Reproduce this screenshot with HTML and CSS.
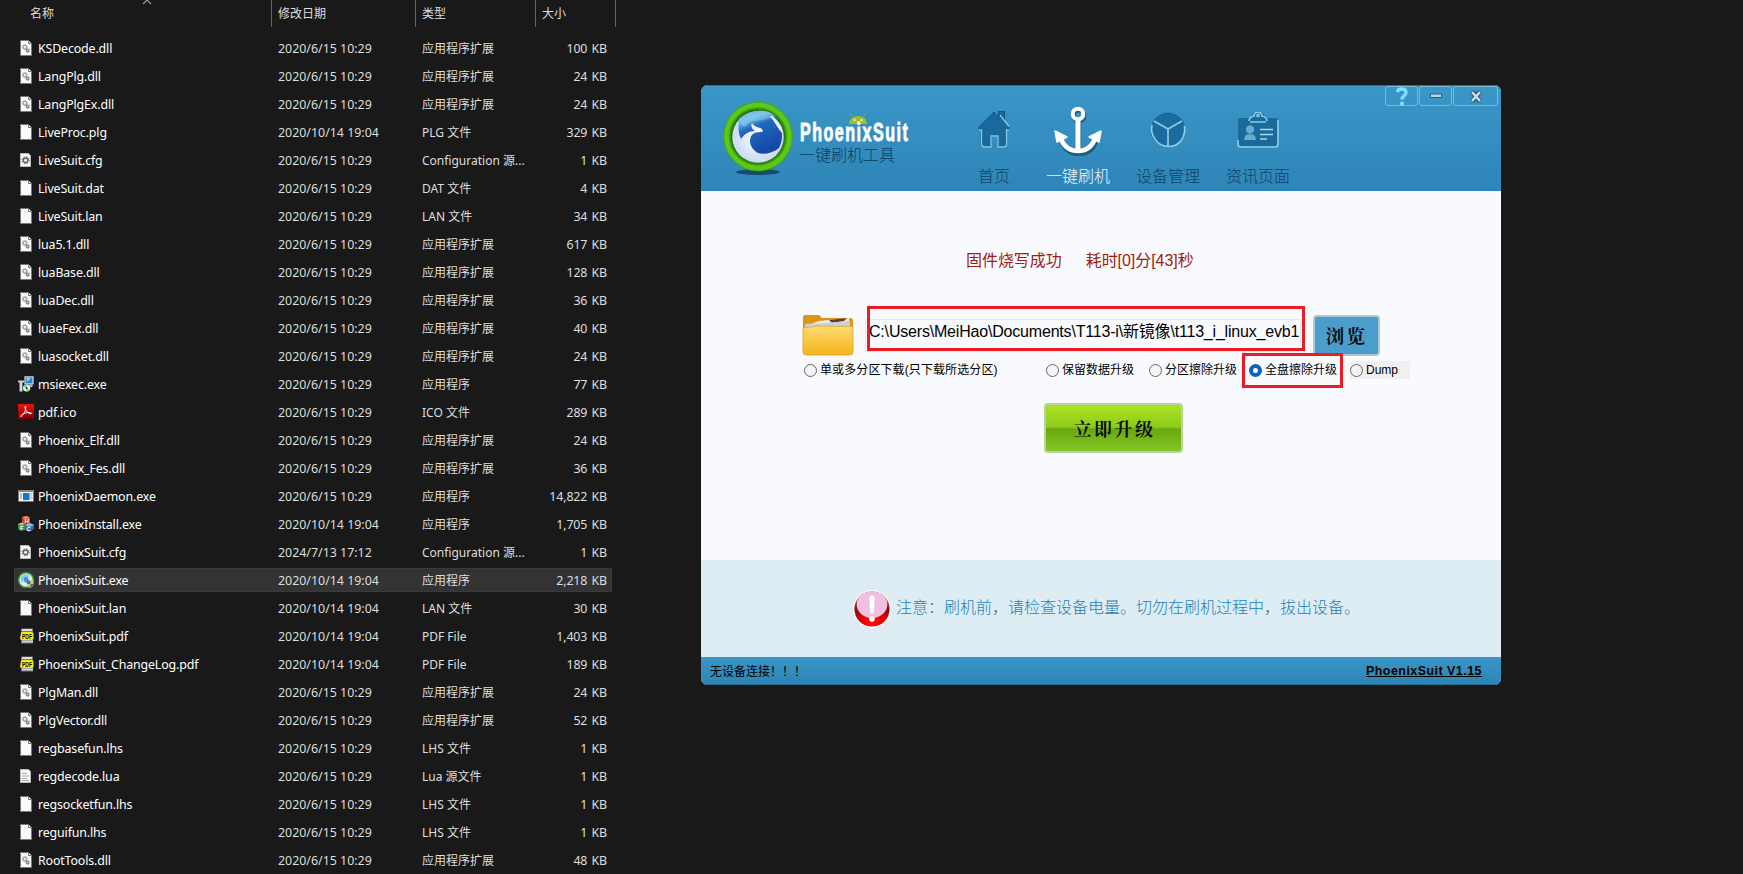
FILE: index.html
```html
<!DOCTYPE html>
<html lang="zh-CN">
<head>
<meta charset="utf-8">
<title>PhoenixSuit</title>
<link rel="stylesheet" href="styles.css">
</head>
<body>
<svg class="defs" width="0" height="0">
  <defs>
    <linearGradient id="gRed" x2="0" y2="1"><stop offset="0" stop-color="#f01010"/><stop offset="1" stop-color="#7a0000"/></linearGradient>
    <linearGradient id="gFolder" x2="0" y2="1"><stop offset="0" stop-color="#fddc72"/><stop offset="1" stop-color="#f6b31d"/></linearGradient>
    <linearGradient id="gBird" x2=".4" y2="1"><stop offset="0" stop-color="#3f8fd0"/><stop offset=".25" stop-color="#69b9e6"/><stop offset=".45" stop-color="#2269bd"/><stop offset="1" stop-color="#1548a8"/></linearGradient>
    <radialGradient id="gWing"><stop offset="0" stop-color="#ffffff"/><stop offset="1" stop-color="#c9daf2"/></radialGradient>
    <radialGradient id="gAlert" cy=".85" r=".8"><stop offset="0" stop-color="#ff1010"/><stop offset=".35" stop-color="#e80000"/><stop offset=".7" stop-color="#8e0a12"/><stop offset="1" stop-color="#b04050"/></radialGradient>
    <radialGradient id="gRing"><stop offset=".72" stop-color="#17520a"/><stop offset=".79" stop-color="#2f8f0c"/><stop offset=".88" stop-color="#62cf1c"/><stop offset="1" stop-color="#3fa80f"/></radialGradient>
  </defs>
  <symbol id="page" viewBox="0 0 16 16"><path d="M2.500.5h8l3 3v12h-11z" fill="#fafafa" stroke="#777"/><path d="M10.500.5v3h3" fill="#ddd" stroke="#777"/></symbol>
  <symbol id="dll" viewBox="0 0 16 16"><use href="#page"/><circle cx="6.800" cy="7" r="1.900" fill="none" stroke="#a3adb8" stroke-width="1.700"/><circle cx="9.600" cy="10.600" r="1.400" fill="none" stroke="#78838f" stroke-width="1.400"/></symbol>
  <symbol id="cfg" viewBox="0 0 16 16"><path d="M2.500 1.500h8l2 2v11h-10z" fill="#f6f6f6" stroke="#bbb"/><circle cx="7.600" cy="8.200" r="2.300" fill="none" stroke="#5c6872" stroke-width="1.500"/><circle cx="7.600" cy="8.200" r="3.400" fill="none" stroke="#5c6872" stroke-width="1.100" stroke-dasharray="1.350 1.320"/></symbol>
  <symbol id="lua" viewBox="0 0 16 16"><path d="M2.500 1.500h8l2 2v11h-10z" fill="#f6f6f6" stroke="#bbb"/><path d="M4 5.500h5M4 8h7M4 10.500h5M4 12.500h7" stroke="#aaa"/></symbol>
  <symbol id="msi" viewBox="0 0 16 16"><path d="M7 .8h8v7H7z" fill="#2f7fd4" stroke="#cfd6dc" stroke-width="1.300"/><path d="M8.500 2h4l-3 4z" fill="#9fd3f7"/><path d="M11 8.500h3.500v2.500H12z" fill="#bbb"/><path d="M0 4.500h7v2H4.500v9h-3v-9H0z" fill="#d9d9d9" stroke="#666" stroke-width=".6"/><circle cx="8.600" cy="12" r="3.600" fill="#e9f6e4"/><path d="M8.600 12l-3-1.500a3.500 3.500 0 0 1 3-2z" fill="#30c8ee"/><path d="M8.600 12l3 2a3.500 3.500 0 0 1-3 1.500z" fill="#6fe020"/><circle cx="8.600" cy="12" r="1" fill="#222"/></symbol>
  <symbol id="acro" viewBox="0 0 16 16"><path d="M0 0h16v15H0z" fill="url(#gRed)"/><path d="M7.200 2.200c1 0 .6 2.500.1 4.300C6.500 9 4 12.800 2.700 12.600c-.8-.5.800-2.600 3.800-3.400 3-.9 6.800-.8 7.100.1.100 1-2.800.5-4.600-1.500C7.700 6.500 6.300 3 7.200 2.200z" fill="none" stroke="#fff" stroke-width=".9"/></symbol>
  <symbol id="app" viewBox="0 0 16 16"><path d="M.5 2.500h15v11H.5z" fill="#f4f4f4" stroke="#777"/><path d="M0 2h16v2H0z" fill="#888"/><path d="M5 5h6.500v7H5z" fill="#0b78d4"/><path d="M2 6h2M2 8h2M2 10h2M12.500 6h2M12.500 8h1M12.500 10h2" stroke="#888"/></symbol>
  <symbol id="cubes" viewBox="0 0 16 16"><path d="M4 1l5-1 3 2v6l-5 1-3-2z" fill="#c9402c"/><path d="M4 1l5-1 3 2-5 1z" fill="#ef8a70"/><path d="M0 8l4-1.500L7 8v6l-4 1-3-2z" fill="#4f8a3a"/><path d="M0 8l4-1.500L7 8 3 9.500z" fill="#9cc98a"/><path d="M7 9l5-2 4 2v4l-5 3-4-2z" fill="#2d6cac"/><path d="M7 9l5-2 4 2-5 2z" fill="#8fbce6"/></symbol>
  <symbol id="phx" viewBox="0 0 16 16"><circle cx="8" cy="8" r="7.300" fill="#dbeef8" stroke="#3ba83a" stroke-width="1.400"/><path d="M3 5a6 6 0 0 1 9-1L8 7c-2 0-3 1-3 4-2-1-3-4-2-6z" fill="#8cc6ec"/><path d="M6 6q2-2 4 0 2 3-2 5-3-2-2-5z" fill="#3f93d8"/><path d="M9 8.500h6.500V12c0 2-1.500 3-3.200 4C10.500 15 9 14 9 12z" fill="#f7c61c"/><path d="M9 8.500h3.200V12H9zM12.200 12h3.200c0 2-1.500 3-3.200 4z" fill="#2a7ad2"/></symbol>
  <symbol id="pdf" viewBox="0 0 16 16"><path d="M3 .5h12v15H3z" fill="#777"/><path d="M4 1h10v2H4z" fill="#ddd"/><path d="M4 12.500h11v2H4z" fill="#d5d5d5"/><path d="M4 4h10l1.500 1.500V11L14 12H3l-1-1.500L3 5z" fill="#f4ea12"/></symbol>
</svg>

<main class="desktop">
<section class="explorer">
  <div class="head"><span class="hname">名称<svg class="sort" viewBox="0 0 10 6"><path d="M1 5l4-4 4 4" fill="none" stroke="#999" stroke-width="1.200"/></svg></span><span>修改日期</span><span>类型</span><span>大小</span></div>
  <div class="rows">
    <div class="row"><svg><use href="#dll"/></svg><b>KSDecode.dll</b><i>2020/6/15 10:29</i><em>应用程序扩展</em><u>100 KB</u></div>
    <div class="row"><svg><use href="#dll"/></svg><b>LangPlg.dll</b><i>2020/6/15 10:29</i><em>应用程序扩展</em><u>24 KB</u></div>
    <div class="row"><svg><use href="#dll"/></svg><b>LangPlgEx.dll</b><i>2020/6/15 10:29</i><em>应用程序扩展</em><u>24 KB</u></div>
    <div class="row"><svg><use href="#page"/></svg><b>LiveProc.plg</b><i>2020/10/14 19:04</i><em>PLG 文件</em><u>329 KB</u></div>
    <div class="row"><svg><use href="#cfg"/></svg><b>LiveSuit.cfg</b><i>2020/6/15 10:29</i><em>Configuration 源...</em><u>1 KB</u></div>
    <div class="row"><svg><use href="#page"/></svg><b>LiveSuit.dat</b><i>2020/6/15 10:29</i><em>DAT 文件</em><u>4 KB</u></div>
    <div class="row"><svg><use href="#page"/></svg><b>LiveSuit.lan</b><i>2020/6/15 10:29</i><em>LAN 文件</em><u>34 KB</u></div>
    <div class="row"><svg><use href="#dll"/></svg><b>lua5.1.dll</b><i>2020/6/15 10:29</i><em>应用程序扩展</em><u>617 KB</u></div>
    <div class="row"><svg><use href="#dll"/></svg><b>luaBase.dll</b><i>2020/6/15 10:29</i><em>应用程序扩展</em><u>128 KB</u></div>
    <div class="row"><svg><use href="#dll"/></svg><b>luaDec.dll</b><i>2020/6/15 10:29</i><em>应用程序扩展</em><u>36 KB</u></div>
    <div class="row"><svg><use href="#dll"/></svg><b>luaeFex.dll</b><i>2020/6/15 10:29</i><em>应用程序扩展</em><u>40 KB</u></div>
    <div class="row"><svg><use href="#dll"/></svg><b>luasocket.dll</b><i>2020/6/15 10:29</i><em>应用程序扩展</em><u>24 KB</u></div>
    <div class="row"><svg><use href="#msi"/></svg><b>msiexec.exe</b><i>2020/6/15 10:29</i><em>应用程序</em><u>77 KB</u></div>
    <div class="row"><svg><use href="#acro"/></svg><b>pdf.ico</b><i>2020/6/15 10:29</i><em>ICO 文件</em><u>289 KB</u></div>
    <div class="row"><svg><use href="#dll"/></svg><b>Phoenix_Elf.dll</b><i>2020/6/15 10:29</i><em>应用程序扩展</em><u>24 KB</u></div>
    <div class="row"><svg><use href="#dll"/></svg><b>Phoenix_Fes.dll</b><i>2020/6/15 10:29</i><em>应用程序扩展</em><u>36 KB</u></div>
    <div class="row"><svg><use href="#app"/></svg><b>PhoenixDaemon.exe</b><i>2020/6/15 10:29</i><em>应用程序</em><u>14,822 KB</u></div>
    <div class="row"><svg><use href="#cubes"/><text class="cube" x="6.500" y="7">H</text><text class="cube" x="2" y="14">F</text><text class="cube" x="8.500" y="15">C</text></svg><b>PhoenixInstall.exe</b><i>2020/10/14 19:04</i><em>应用程序</em><u>1,705 KB</u></div>
    <div class="row"><svg><use href="#cfg"/></svg><b>PhoenixSuit.cfg</b><i>2024/7/13 17:12</i><em>Configuration 源...</em><u>1 KB</u></div>
    <div class="row selected"><svg><use href="#phx"/></svg><b>PhoenixSuit.exe</b><i>2020/10/14 19:04</i><em>应用程序</em><u>2,218 KB</u></div>
    <div class="row"><svg><use href="#page"/></svg><b>PhoenixSuit.lan</b><i>2020/10/14 19:04</i><em>LAN 文件</em><u>30 KB</u></div>
    <div class="row"><svg><use href="#pdf"/><text class="pdft" x="4" y="10.500" textLength="10" lengthAdjust="spacingAndGlyphs">PDF</text></svg><b>PhoenixSuit.pdf</b><i>2020/10/14 19:04</i><em>PDF File</em><u>1,403 KB</u></div>
    <div class="row"><svg><use href="#pdf"/><text class="pdft" x="4" y="10.500" textLength="10" lengthAdjust="spacingAndGlyphs">PDF</text></svg><b>PhoenixSuit_ChangeLog.pdf</b><i>2020/10/14 19:04</i><em>PDF File</em><u>189 KB</u></div>
    <div class="row"><svg><use href="#dll"/></svg><b>PlgMan.dll</b><i>2020/6/15 10:29</i><em>应用程序扩展</em><u>24 KB</u></div>
    <div class="row"><svg><use href="#dll"/></svg><b>PlgVector.dll</b><i>2020/6/15 10:29</i><em>应用程序扩展</em><u>52 KB</u></div>
    <div class="row"><svg><use href="#page"/></svg><b>regbasefun.lhs</b><i>2020/6/15 10:29</i><em>LHS 文件</em><u>1 KB</u></div>
    <div class="row"><svg><use href="#lua"/></svg><b>regdecode.lua</b><i>2020/6/15 10:29</i><em>Lua 源文件</em><u>1 KB</u></div>
    <div class="row"><svg><use href="#page"/></svg><b>regsocketfun.lhs</b><i>2020/6/15 10:29</i><em>LHS 文件</em><u>1 KB</u></div>
    <div class="row"><svg><use href="#page"/></svg><b>reguifun.lhs</b><i>2020/6/15 10:29</i><em>LHS 文件</em><u>1 KB</u></div>
    <div class="row"><svg><use href="#dll"/></svg><b>RootTools.dll</b><i>2020/6/15 10:29</i><em>应用程序扩展</em><u>48 KB</u></div>
  </div>
</section>

<section class="window">
  <header class="top">
    <svg class="logo" width="72" height="76" viewBox="0 0 72 76">
      <ellipse cx="36" cy="71" rx="22" ry="3" fill="#123c58" opacity=".8"/>
      <circle cx="36" cy="35.500" r="34.800" fill="url(#gRing)"/>
      <circle cx="36" cy="35.500" r="31.500" fill="none" stroke="#5cc91a" stroke-width="4"/>
      <circle cx="36" cy="36" r="25.800" fill="url(#gWing)"/>
      <path d="M17 18C27 8 45 7 53 15c8 8 9 23 4 32-6 5-15 7-21 5-9-5-10-15-5-19 4-3 9-1 10-3-1-5-8-2-11-8-2 4 1 7 3 8-6 0-11 3-14 8-3-6-3-14-2-20z" fill="url(#gBird)"/>
      <path d="M17 18C27 8 45 7 53 15c-9 6-22 3-28 9-3 3-6 2-8-6z" fill="#b5e5f7" opacity=".35"/>
      <path d="M48 15c5 6 8 13 13 18-1-8-5-14-11-18z" fill="#eef4ff"/>
    </svg>
    <div class="brand">
      <svg width="114" height="33" viewBox="0 0 114 33">
        <path d="M51 12a9 8 0 0 1 18 0z" fill="#9ebe2a"/><path d="M54.500 4.500l-2-3M65.500 4.500l2-3" stroke="#8aa838"/><circle cx="56.500" cy="8" r="1" fill="#fff"/><circle cx="63.500" cy="8" r="1" fill="#fff"/>
        <text class="wordmark" transform="translate(2 28.500) scale(.62 1)" textLength="174" lengthAdjust="spacing">PhoenixSuit</text>
      </svg>
      <span>一键刷机工具</span>
    </div>
    <nav>
      <a><svg width="36" height="48" viewBox="0 0 36 48"><path d="M3 21L18 6l4.500 4.500V5.500h6v11L33 21v3h-3v15q0 2-2 2h-6V30h-7v11H8q-3 0-3-2V24H3z" fill="#176a9b" stroke="#0f5680" stroke-width="1"/><path d="M3 24h2.500v14q0 3 3 3H15V30h7v11h6q2.500 0 2.500-3V24H33M24 9l9 11.500" fill="none" stroke="#8bc8e6" stroke-width="1.300"/></svg><span>首页</span></a>
      <a class="on"><svg width="50" height="50" viewBox="0 0 50 50"><g transform="translate(1 2)" fill="none" stroke="#194e6e" stroke-width="4" opacity=".75"><circle cx="25" cy="8" r="5.500"/><path d="M25 14v32M7 29c2 12 9 17 18 17s16-5 18-17" stroke-width="4.500"/></g><g fill="none" stroke="#fff" stroke-width="4"><circle cx="25" cy="8" r="5.300"/><path d="M25 13v32" stroke-width="5"/><path d="M7 30c3 10 9 15 18 15s15-5 18-15" stroke-width="4.500"/></g><path d="M2 25l2 11 10-5zM48 25l-2 11-10-5z" fill="#fff" stroke="#fff" stroke-width="1.500" stroke-linejoin="round"/></svg><span>一键刷机</span></a>
      <a><svg width="40" height="48" viewBox="0 0 40 48"><circle cx="20" cy="24" r="16.800" fill="#1a6d9e" stroke="#1a618c" stroke-width="1"/><path d="M20 41V23L6 15M20 23l14-8M4 19c-2 9 4 21 16 21.500S38 30 36.500 20" fill="none" stroke="#8fcbe8" stroke-width="1.700"/></svg><span>设备管理</span></a>
      <a><svg width="44" height="48" viewBox="0 0 44 48"><path d="M4 12h11q0-5 7-7.500 7 2.500 7 7.500h11q2 0 2 2v24q0 2-2 2H4q-2 0-2-2V14q0-2 2-2z" fill="#196b9b"/><path d="M2 34v4q0 3 3 3h34q3 0 3-3V14M14 16h16M13 15q0-4 5-5c0-5 8-5 8 0 5 1 5 5 5 5" fill="none" stroke="#8ecbe7" stroke-width="1.700"/><circle cx="22" cy="9.500" r="2" fill="#84bddc"/><circle cx="14" cy="23.500" r="4" fill="#68adcf"/><path d="M8 34q0-6 6-6t6 6z" fill="#68adcf"/><path d="M24 23.500h13M24 28.500h13M24 33h7" stroke="#a8daee" stroke-width="1.700"/></svg><span>资讯页面</span></a>
    </nav>
    <div class="controls">
      <span><svg width="14" height="19" viewBox="0 0 14 19"><path d="M2.500 5Q3 2 7 2t4 3.500c0 3-4 3-4 7" fill="none" stroke="#86dcff" stroke-width="3.400"/><circle cx="7" cy="16.700" r="2.100" fill="#86dcff"/></svg></span>
      <span><svg width="14" height="6" viewBox="0 0 14 6"><path d="M1.500 1h11v3.500h-11z" fill="#bcd5e4" stroke="#2d5f7d"/></svg></span>
      <span class="wide"><svg width="14" height="13" viewBox="0 0 14 13"><path d="M3 1.500l8 10M11 1.500l-8 10" stroke="#2e566d" stroke-width="4.500"/><path d="M3 2l8 9M11 2l-8 9" stroke="#cde0eb" stroke-width="2.400"/></svg></span>
    </div>
  </header>

  <div class="body">
    <p class="result"><span>固件烧写成功</span><span>耗时[0]分[43]秒</span></p>
    <div class="pick">
      <svg class="folder" width="52" height="42" viewBox="0 0 52 42"><path d="M1 3q0-2 2-2h14l3 3h28q3 0 3 3v20H1z" fill="#dc9615"/><path d="M4 12l13-5 30-3 1 10H5z" fill="#eee"/><path d="M27 6l18-2-3 3-12 2z" fill="#643b2a"/><path d="M3 10l20-1 24-2 2 7H3z" fill="#cdd1d6"/><path d="M1 14q9-1 13-2l37 .5V38q0 3-3 3H4q-3 0-3-3z" fill="url(#gFolder)" stroke="#d9a22c" stroke-width=".8"/></svg>
      <div class="path"><span>C:\Users\MeiHao\Documents\T113-i\新镜像\t113_i_linux_evb1</span><div class="mark"></div></div>
      <button class="browse">浏览</button>
    </div>
    <div class="options">
      <label class="o1"><s></s>单或多分区下载(只下载所选分区)</label>
      <label class="o2"><s></s>保留数据升级</label>
      <label class="o3"><s></s>分区擦除升级</label>
      <label class="o4"><s class="checked"></s>全盘擦除升级<div class="mark"></div></label>
      <label class="o5"><s></s>Dump</label>
    </div>
    <button class="go">立即升级</button>
  </div>

  <div class="notice">
    <svg width="38" height="40" viewBox="0 0 38 40"><circle cx="19" cy="20" r="18.800" fill="#fff"/><circle cx="19" cy="20" r="17.600" fill="url(#gAlert)"/><ellipse cx="19" cy="15.500" rx="15.300" ry="13.300" fill="#f1bfe0"/><path d="M16.300 9q0-2.500 2.700-2.500T21.700 9L20.800 23q-.3 2-1.800 2t-1.800-2z" fill="#fff"/><circle cx="19" cy="30" r="2.800" fill="#fff"/></svg>
    <span>注意：刷机前，请检查设备电量。切勿在刷机过程中，拔出设备。</span>
  </div>
  <footer><span>无设备连接！！！</span><a>PhoenixSuit V1.15</a></footer>
</section>
</main>
</body>
</html>
```
FILE: styles.css
```css
* { box-sizing: border-box; }
body { margin: 0; background: #191919; overflow: hidden; }
.defs { position: absolute; }
.desktop { display: flex; width: 1743px; height: 874px; overflow: hidden; font-family: "Noto Sans", "Noto Sans CJK SC", sans-serif; }

/* File list */
.explorer { width: 701px; flex: none; color: #dedede; }
.head { display: grid; grid-template-columns: 242px 144px 120px 80px; height: 27px; padding-left: 30px; font-size: 12px; line-height: 27px; }
.head span { border-right: 1px solid #636363; padding-left: 6px; }
.head .hname { position: relative; padding-left: 0; }
.sort { position: absolute; left: 112px; top: -1px; width: 10px; height: 6px; }
.rows { padding: 9px 0 0 14px; }
.row { display: grid; grid-template-columns: 16px 244px 144px 110px 75px; width: 598px; height: 24px; margin-bottom: 4px; padding-left: 4px; line-height: 23px; font-size: 12.400px; white-space: nowrap; align-items: center; }
.row svg { width: 16px; height: 16px; overflow: visible; }
.row b, .row i, .row em, .row u { font-weight: 400; font-style: normal; text-decoration: none; }
.row b { padding-left: 4px; color: #fff; letter-spacing: -.14px; }
.row em { font-size: 12px; }
.row u { text-align: right; word-spacing: 1px; letter-spacing: -.1px; }
.selected { background: #333; box-shadow: inset 0 0 0 1px #3b3b3b; }
.cube { font: bold 6px "Liberation Sans", sans-serif; fill: #fff; }
.pdft { font: bold 6.500px "Liberation Sans", sans-serif; fill: #111; }

/* Flash tool window */
.window { display: flex; flex-direction: column; width: 800px; height: 600px; margin-top: 85px; border-radius: 7px; overflow: hidden; background: #f9fafd; font-family: "Liberation Sans", "Noto Sans CJK SC", sans-serif; font-weight: 300; }
.top { display: flex; height: 106px; background: linear-gradient(#3a97c7, #2e85b7); box-shadow: inset 0 1px #2f6f92; align-items: flex-start; }
.logo { flex: none; margin: 16px 0 0 21px; }
.brand { display: flex; flex-direction: column; width: 114px; margin: 27px 0 0 4px; color: #0c3f63; font-size: 16px; line-height: 20px; }
.brand span { margin: 1px 0 0 1px; white-space: nowrap; }
.brand svg { overflow: visible; }
.wordmark { font: bold 26px "Liberation Sans", sans-serif; fill: #fff; stroke: #fff; stroke-width: .9; }
nav { display: flex; margin: 21px 0 0 50px; flex: 1; }
nav a { display: flex; flex-direction: column; align-items: center; justify-content: space-between; width: 64px; height: 81px; font-size: 16px; line-height: 20px; color: #0f4268; white-space: nowrap; }
nav a + a { margin-left: 26px; }
nav a.on { margin-left: 20px; color: #f2f5f7; }
nav svg { flex: none; }
.controls { display: flex; gap: 1px; height: 21px; margin: 1px 3px 0 0; }
.controls span { display: flex; align-items: center; justify-content: center; width: 33px; height: 20px; border: 1px solid #7db8d6; border-radius: 3px; }
.controls .wide { width: 45px; }

.body { height: 369px; flex: none; }
.result { display: flex; gap: 24px; margin: 0; padding: 58px 0 0 265px; font-size: 16px; line-height: 24px; color: #9f1c12; font-weight: 400; letter-spacing: -.05px; }
.pick { display: flex; margin-top: 41px; padding-left: 101px; align-items: flex-start; }
.pick > svg { flex: none; }
.path { position: relative; width: 436px; height: 33px; margin: 5px 0 0 11px; border: 1px solid #e6e8ec; font-size: 16px; line-height: 24px; color: #000; padding-left: 3px; white-space: nowrap; letter-spacing: -.19px; font-weight: 400; }
.mark { position: absolute; border: 3px solid #ed1c24; }
.path .mark { left: 1px; top: -14px; width: 438px; height: 45px; }
button { padding: 0; font-family: "Noto Serif CJK SC", "Noto Sans CJK SC", sans-serif; font-weight: 700; color: #0a0a0a; }
.browse { width: 67px; height: 41px; margin: 1px 0 0 12px; border: 2px solid #b0c6cf; border-radius: 4px; background: #4b9ecb; font-size: 18px; letter-spacing: 3px; padding: 0 0 2px 1px; }
.options { display: flex; margin-top: 5px; padding-left: 103px; font-size: 12px; line-height: 18px; color: #000; white-space: nowrap; font-weight: 400; }
.options label { display: flex; align-items: center; gap: 3px; height: 18px; position: relative; }
.options s { width: 13px; height: 13px; border: 1px solid #686868; border-radius: 50%; background: #f4f4f4; flex: none; }
.options .checked { border: 4px solid #0a63b8; background: #fff; }
.o1 { width: 242px; letter-spacing: .1px; }
.o2 { width: 103px; }
.o3 { width: 100px; }
.o4 { width: 101px; }
.o4 .mark { left: -7px; top: -8px; width: 101px; height: 35px; }
.o5 { width: 60px; background: #f0f0f0; }
.go { display: block; width: 139px; height: 50px; margin: 24px 0 0 343px; border: 2px solid #b8d2a0; border-radius: 4px; background: linear-gradient(#abe322, #8ccb19 48%, #6aa80e 52%, #82c626); font-size: 18px; letter-spacing: 2.500px; padding-left: 2px; }

.notice { display: flex; height: 97px; flex: none; align-items: center; padding: 0 0 0 152px; background: #deecf4; color: #1f7fb6; font-size: 16px; gap: 5px; }
.notice span { margin-top: -5px; }
footer { display: flex; height: 28px; justify-content: space-between; align-items: center; padding: 0 19px 1px 9px; background: linear-gradient(#3996c6, #2e84b5); box-shadow: inset 0 -1px #2a6a8d; font-size: 12px; color: #000; font-weight: 400; }
footer a { font-weight: 700; font-size: 12.500px; text-decoration: underline; letter-spacing: .45px; }
```
